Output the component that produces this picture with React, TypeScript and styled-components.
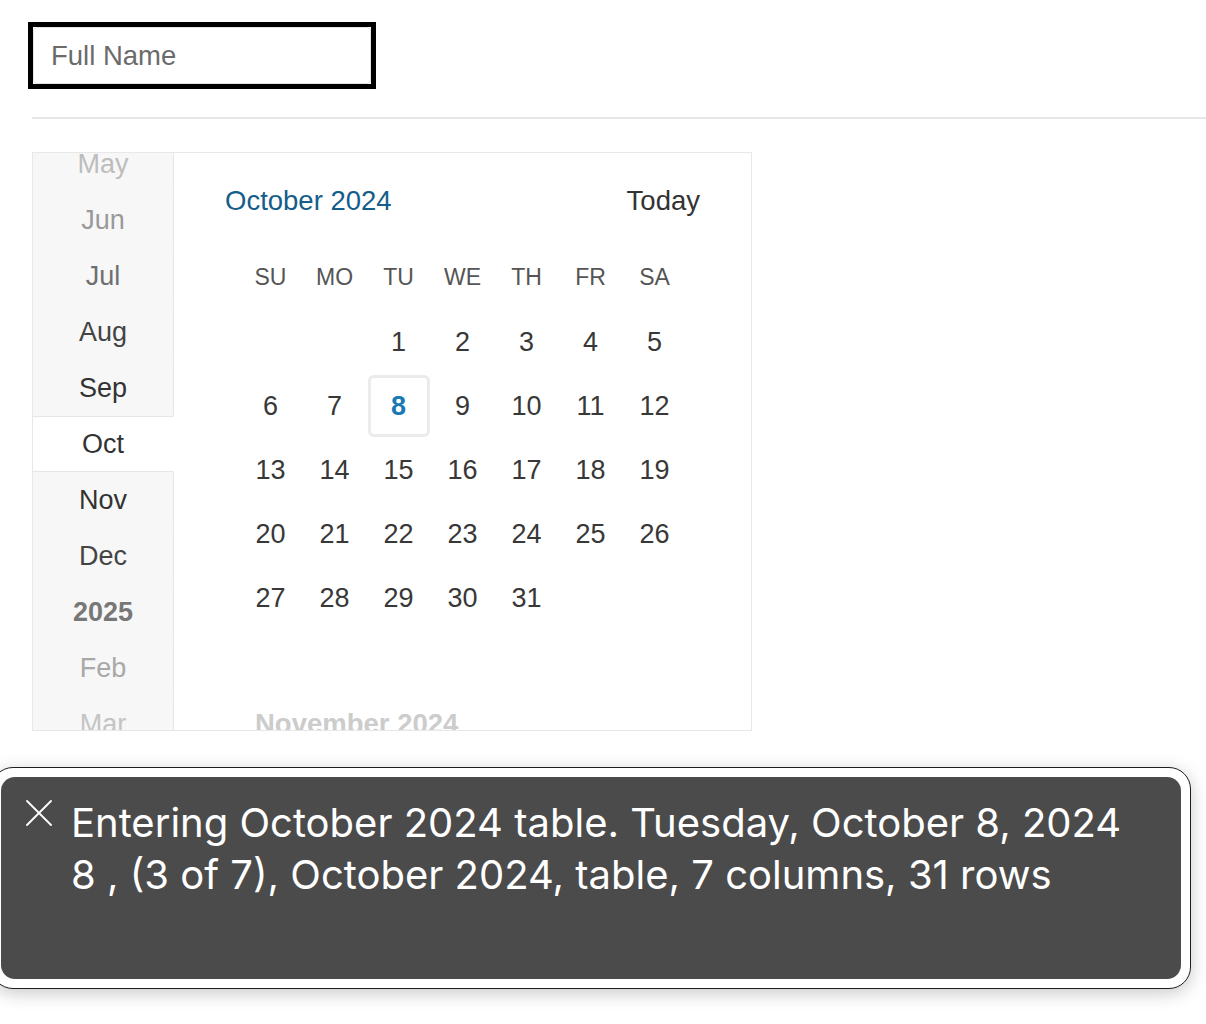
import React from "react";
import styled, { createGlobalStyle } from "styled-components";

const Global = createGlobalStyle`
  html, body { margin: 0; padding: 0; background: #ffffff; }
  body { font-family: "Liberation Sans", Arial, sans-serif; overflow: hidden; }
  * { box-sizing: border-box; }
`;

const Page = styled.div`
  position: relative;
  width: 1206px;
  height: 1024px;
  padding: 22px 0 0 28px;
`;

const FocusRing = styled.div`
  width: 348px;
  height: 67px;
  border: 5px solid #000000;
`;

const NameInput = styled.input`
  display: block;
  width: 100%;
  height: 100%;
  padding: 0 0 0 17px;
  border: 1px solid #e4e4e4;
  border-radius: 4px;
  outline: none;
  font-family: "Liberation Sans", Arial, sans-serif;
  font-size: 27.5px;
  color: #333;
  background: #fff;
  &::placeholder { color: #6b6b6b; }
`;

const Divider = styled.hr`
  margin: 28px 0 0 4px;
  border: none;
  border-top: 2px solid #e6e6e6;
  width: 1174px;
`;

const Calendar = styled.div`
  display: flex;
  margin: 33px 0 0 4px;
  width: 720px;
  height: 579px;
  border: 1px solid #e8e8e8;
  overflow: hidden;
`;

const MonthColumn = styled.div`
  width: 141px;
  flex: none;
  background: #f7f7f7;
  overflow: hidden;
`;

const MonthList = styled.div`
  margin-top: -17px;
`;

const MonthItem = styled.div<{ $color: string; $selected?: boolean; $bold?: boolean }>`
  height: 56px;
  line-height: 54px;
  text-align: center;
  font-size: 27px;
  color: ${(p) => p.$color};
  font-weight: ${(p) => (p.$bold ? 700 : 400)};
  border-right: 1px solid ${(p) => (p.$selected ? "#ffffff" : "#e6e6e6")};
  background: ${(p) => (p.$selected ? "#ffffff" : "transparent")};
  border-top: 1px solid ${(p) => (p.$selected ? "#e6e6e6" : "transparent")};
  border-bottom: 1px solid ${(p) => (p.$selected ? "#e6e6e6" : "transparent")};
`;

const Main = styled.div`
  flex: 1;
  padding-top: 20px;
  overflow: hidden;
`;

const Header = styled.div`
  display: flex;
  justify-content: space-between;
  align-items: center;
  width: 475px;
  height: 56px;
  margin: 0 auto;
`;

const MonthTitle = styled.div`
  font-size: 27.5px;
  color: #155d8a;
`;

const TodayButton = styled.div`
  font-size: 27.5px;
  color: #333333;
`;

const Grid = styled.div`
  display: grid;
  grid-template-columns: repeat(7, 64px);
  grid-template-rows: 66px;
  grid-auto-rows: 64px;
  width: 448px;
  margin: 15px auto 0;
`;

const WeekDay = styled.div`
  display: flex;
  align-items: center;
  justify-content: center;
  font-size: 23px;
  color: #555555;
`;

const Day = styled.div<{ $selected?: boolean }>`
  display: flex;
  align-items: center;
  justify-content: center;
  font-size: 27px;
  color: ${(p) => (p.$selected ? "#1a78b4" : "#383838")};
  font-weight: ${(p) => (p.$selected ? 700 : 400)};
  margin: 1px;
  border: 3px solid ${(p) => (p.$selected ? "#ebebeb" : "transparent")};
  border-radius: 6px;
`;

const NextTitle = styled.div`
  margin: 78px 0 0 81px;
  font-size: 27.5px;
  line-height: 32px;
  font-weight: 700;
  color: #cccccc;
`;

const Caption = styled.div`
  position: absolute;
  top: 767px;
  left: -9px;
  width: 1200px;
  height: 222px;
  padding: 9px;
  background: #ffffff;
  border: 1px solid #1e1e1e;
  border-radius: 22px;
  box-shadow: 0 4px 18px rgba(0, 0, 0, 0.22);
`;

const CaptionInner = styled.div`
  display: flex;
  align-items: flex-start;
  gap: 19px;
  height: 100%;
  padding: 20px 0 0 25px;
  background: #4b4b4b;
  border-radius: 14px;
`;

const CloseIcon = styled.svg`
  flex: none;
  margin-top: 3px;
  width: 26px;
  height: 26px;
`;

const CaptionText = styled.div`
  font-family: Inter, "Liberation Sans", Arial, sans-serif;
  font-size: 40px;
  line-height: 52px;
  color: #ffffff;
`;

const months: { label: string; color: string; bold?: boolean; selected?: boolean }[] = [
  { label: "May", color: "#bdbdbd" },
  { label: "Jun", color: "#9a9a9a" },
  { label: "Jul", color: "#6f6f6f" },
  { label: "Aug", color: "#444444" },
  { label: "Sep", color: "#333333" },
  { label: "Oct", color: "#333333", selected: true },
  { label: "Nov", color: "#333333" },
  { label: "Dec", color: "#444444" },
  { label: "2025", color: "#777777", bold: true },
  { label: "Feb", color: "#a8a8a8" },
  { label: "Mar", color: "#c4c4c4" },
];

const weekDays = ["SU", "MO", "TU", "WE", "TH", "FR", "SA"];

export default function App() {
  const cells: (number | null)[] = [null, null];
  for (let d = 1; d <= 31; d++) cells.push(d);
  return (
    <Page>
      <Global />
      <FocusRing>
        <NameInput placeholder="Full Name" />
      </FocusRing>
      <Divider />
      <Calendar>
        <MonthColumn>
          <MonthList>
            {months.map((m) => (
              <MonthItem key={m.label} $color={m.color} $bold={m.bold} $selected={m.selected}>
                {m.label}
              </MonthItem>
            ))}
          </MonthList>
        </MonthColumn>
        <Main>
          <Header>
            <MonthTitle>October 2024</MonthTitle>
            <TodayButton>Today</TodayButton>
          </Header>
          <Grid>
            {weekDays.map((w) => (
              <WeekDay key={w}>{w}</WeekDay>
            ))}
            {cells.map((c, i) => (
              <Day key={i} $selected={c === 8}>
                {c ?? ""}
              </Day>
            ))}
          </Grid>
          <NextTitle>November 2024</NextTitle>
        </Main>
      </Calendar>
      <Caption>
        <CaptionInner>
          <CloseIcon viewBox="0 0 26 26" fill="none">
            <path d="M1 1 L25 25 M25 1 L1 25" stroke="#ffffff" strokeWidth="1.8" strokeLinecap="round" />
          </CloseIcon>
          <CaptionText>
            Entering October 2024 table. Tuesday, October 8, 2024
            <br />8 , (3 of 7), October 2024, table, 7 columns, 31 rows
          </CaptionText>
        </CaptionInner>
      </Caption>
    </Page>
  );
}
